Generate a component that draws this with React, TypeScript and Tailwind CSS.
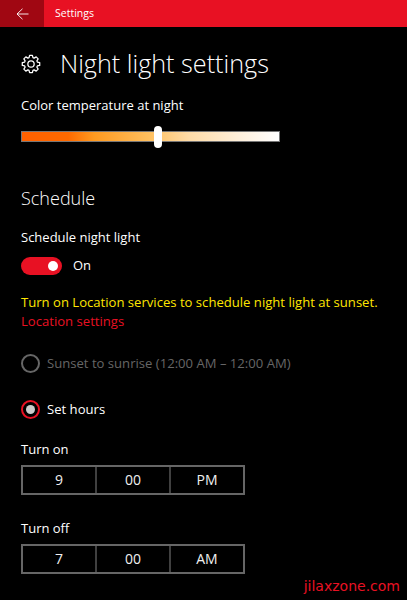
const font = { fontFamily: '"Open Sans", "Noto Sans", sans-serif' };

// 8 tooth cog outline
function gearPath() {
  const pts: string[] = [];
  for (let i = 0; i < 8; i++) {
    const a = (i * Math.PI) / 4;
    const p = (r: number, off: number) => {
      const t = a + off;
      return `${(12 + r * Math.sin(t)).toFixed(2)} ${(12 - r * Math.cos(t)).toFixed(2)}`;
    };
    pts.push(p(8, -0.3), p(10.6, -0.16), p(10.6, 0.16), p(8, 0.3));
  }
  return `M${pts.join('L')}Z`;
}

function TimeBox({ values }: { values: string[] }) {
  return (
    <div className="mt-[6px] flex h-[30px] w-[224px] border-2 border-[#666666]">
      {values.map((v, i) => (
        <div
          key={v}
          className={`flex flex-1 items-center justify-center text-[14px] text-[#f0f0f0] ${i > 0 ? 'border-l-2 border-[#404040]' : ''}`}
        >
          {v}
        </div>
      ))}
    </div>
  );
}

export default function App() {
  return (
    <div className="relative h-[600px] w-[407px] overflow-hidden bg-black text-white" style={font}>
      {/* title bar */}
      <div className="flex h-[27px] items-center bg-[#e81123]">
        <div className="flex h-full w-[44px] items-center justify-center bg-[#a00712]">
          <svg width="13" height="12" viewBox="0 0 13 12" fill="none" stroke="white" strokeWidth="0.9">
            <path d="M6.5 0.8 L1 6 L6.5 11.2 M1 6 H12.5" />
          </svg>
        </div>
        <span className="ml-[11px] text-[10.5px]">Settings</span>
      </div>

      <div className="px-[21px]">
        <div className="mt-[16px] flex h-[42px] items-center">
          <svg width="20" height="20" viewBox="0 0 24 24" fill="none" stroke="white" strokeWidth="1.5" strokeLinejoin="round">
            <path d={gearPath()} />
            <circle cx="12" cy="12" r="3.8" />
          </svg>
          <h1 className="ml-[19px] text-[25.2px] font-light leading-none">Night light settings</h1>
        </div>

        <div className="mt-[10px] text-[13px] leading-[20px]">Color temperature at night</div>

        <div className="relative mt-[16px] h-[11px] w-[259px] border border-[#777777] bg-[linear-gradient(to_right,#ff6000_0%,#ff6a00_18%,#ff9a20_28%,#ffc060_50%,#ffdca8_65%,#fff0dc_85%,#ffffff_100%)]">
          <div className="absolute left-[132px] top-[-6px] h-[22px] w-[8px] rounded-full bg-white" />
        </div>

        <h2 className="mt-[44px] text-[18px] font-light leading-[24px]">Schedule</h2>

        <div className="mt-[17px] text-[13px] leading-[20px]">Schedule night light</div>

        <div className="mt-[9px] flex items-center">
          <div className="flex h-[18px] w-[41px] items-center justify-end rounded-full bg-[#e81123] pr-[4px]">
            <div className="h-[10px] w-[10px] rounded-full bg-white" />
          </div>
          <span className="ml-[11px] text-[13px]">On</span>
        </div>

        <p className="mt-[17px] whitespace-nowrap text-[13.1px] leading-[19px] text-[#ffe600]">
          Turn on Location services to schedule night light at sunset.
        </p>
        <p className="text-[13.1px] leading-[19px] text-[#e81123]">Location settings</p>

        <div className="mt-[23px] flex items-center">
          <div className="h-[19px] w-[19px] rounded-full border-2 border-[#666666]" />
          <span className="ml-[7px] text-[13.1px] text-[#666666]">Sunset to sunrise (12:00 AM – 12:00 AM)</span>
        </div>

        <div className="mt-[27px] flex items-center">
          <div className="flex h-[19px] w-[19px] items-center justify-center rounded-full border-2 border-[#e81123]">
            <div className="h-[9px] w-[9px] rounded-full bg-[#cccccc]" />
          </div>
          <span className="ml-[7px] text-[13.1px]">Set hours</span>
        </div>

        <div className="mt-[19px] text-[13px] leading-[20px]">Turn on</div>
        <TimeBox values={['9', '00', 'PM']} />

        <div className="mt-[23px] text-[13px] leading-[20px]">Turn off</div>
        <TimeBox values={['7', '00', 'AM']} />
      </div>

      <div className="absolute bottom-[3px] right-[7px] text-[14px] text-[#e81123]" style={{ fontFamily: '"DejaVu Sans", sans-serif' }}>
        jilaxzone.com
      </div>
    </div>
  );
}
